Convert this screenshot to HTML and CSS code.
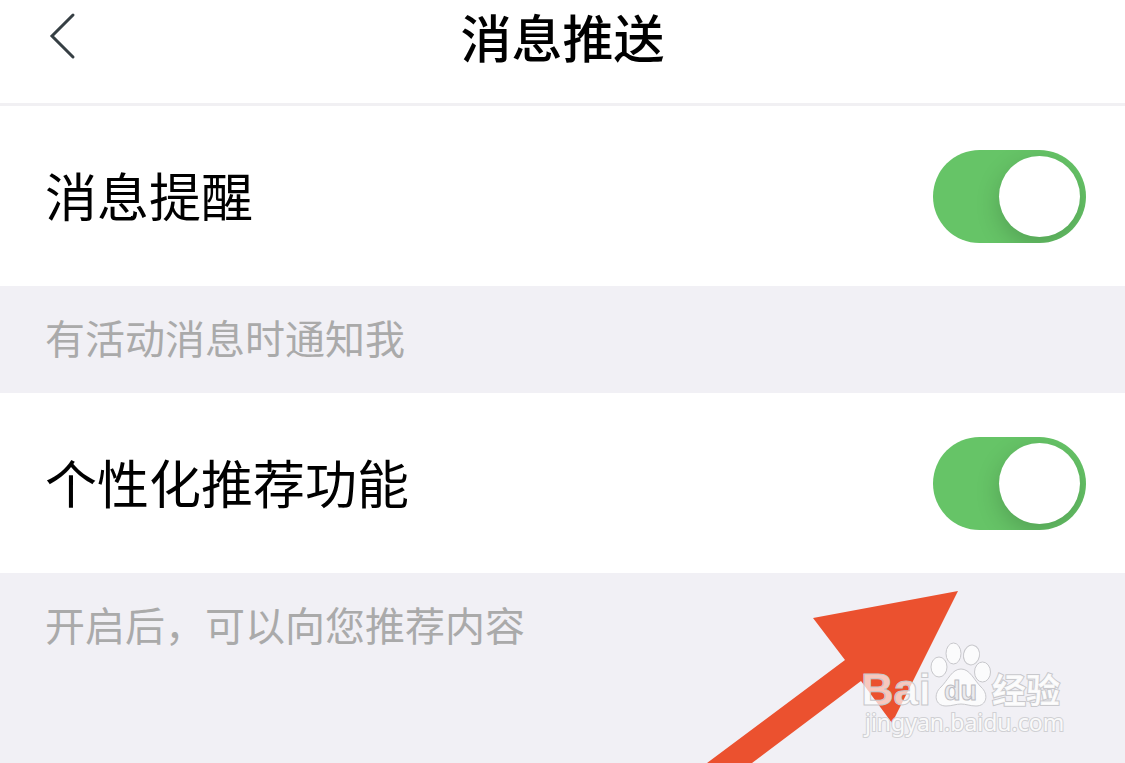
FILE: index.html
```html
<!DOCTYPE html>
<html lang="zh-CN">
<head>
<meta charset="utf-8">
<meta name="viewport" content="width=device-width, initial-scale=1">
<title>消息推送</title>
<link rel="stylesheet" href="styles.css">
</head>
<body>
<div class="page">
  <header class="header">
    <button class="back" type="button" aria-label="返回">
      <svg width="28" height="48" viewBox="0 0 28 48" fill="none" stroke="#363f44" stroke-width="3" stroke-linecap="round" stroke-linejoin="miter"><path d="M25 3 4 24 25 45"/></svg>
    </button>
    <h1 class="title">消息推送</h1>
  </header>
  <main>
    <div class="row">
      <label class="label" for="notify">消息提醒</label>
      <input class="switch" id="notify" type="checkbox" role="switch" checked>
    </div>
    <p class="hint">有活动消息时通知我</p>
    <div class="row">
      <label class="label" for="personal">个性化推荐功能</label>
      <input class="switch" id="personal" type="checkbox" role="switch" checked>
    </div>
    <p class="hint">开启后，可以向您推荐内容</p>
  </main>
  <svg class="overlay" width="360" height="180" viewBox="706 583 360 180">
    <path fill="#eb512f" d="M958 591 813 618 845 660 707 763H752L861 681 892 723Z"/>
    <g class="mark">
      <text class="mark-latin" x="861" y="705">Bai</text>
      <ellipse cx="939" cy="667" rx="8" ry="10"/>
      <ellipse cx="953.500" cy="653.500" rx="7.500" ry="10.500"/>
      <ellipse cx="971.500" cy="655" rx="8" ry="10" transform="rotate(10 971.500 655)"/>
      <ellipse cx="982.500" cy="672" rx="8" ry="10"/>
      <path d="M961 669C952 669 948 680 941 687C933 694 935 706 946 706C952 706 956 704 961 704C966 704 970 706 976 706C987 706 989 694 981 687C974 680 970 669 961 669Z"/>
      <text class="mark-du" x="944" y="700">du</text>
      <text class="mark-han" x="992" y="703">经验</text>
      <text class="mark-url" x="865" y="731">jingyan.baidu.com</text>
    </g>
  </svg>
</div>
</body>
</html>
```
FILE: styles.css
```css
* {
  box-sizing: border-box;
}

body {
  margin: 0;
  background: #f1f0f5;
  color: #000;
  font-family: "Noto Sans CJK SC", sans-serif;
}

.page {
  position: relative;
  min-height: 100vh;
  overflow: hidden;
}

.header {
  display: grid;
  grid-template-columns: 1fr auto 1fr;
  align-items: center;
  padding: 0 48px 31px;
  border-bottom: 3px solid #f1f0f3;
  background: #fff;
}

.back {
  display: flex;
  justify-self: start;
  padding: 0;
  border: 0;
  background: none;
}

.title {
  margin: 0;
  font-size: 51px;
  font-weight: 500;
  line-height: 72px;
}

.row {
  display: flex;
  align-items: center;
  justify-content: space-between;
  min-height: 180px;
  padding: 0 39px 0 45px;
  background: #fff;
}

.label {
  padding-bottom: 2px;
  font-size: 52px;
  font-weight: 400;
  line-height: 76px;
}

.switch {
  flex: none;
  width: 153px;
  height: 93px;
  margin: 0;
  padding: 6px;
  border-radius: 47px;
  appearance: none;
  background: #66c467;
  overflow: hidden;
}

.switch::before {
  content: "";
  display: block;
  width: 81px;
  height: 81px;
  border-radius: 50%;
  background: #fff;
  box-shadow: 0 8px 24px rgba(0, 0, 0, 0.18);
}

.switch:checked::before {
  margin-left: auto;
}

.hint {
  margin: 0;
  padding: 22px 45px 27px;
  color: #aaa;
  font-size: 40px;
  line-height: 58px;
}

.overlay {
  position: absolute;
  right: 59px;
  bottom: 0;
  pointer-events: none;
}

.mark {
  fill: #fff;
  fill-opacity: 0.7;
  stroke: #c8c8cc;
  stroke-width: 1px;
}

.mark-latin {
  font: bold 45px "Liberation Sans", sans-serif;
}

.mark-du {
  fill: #e4e4e8;
  stroke: #bcbcc2;
  font: bold 27px "Liberation Sans", sans-serif;
}

.mark-han {
  fill-opacity: 0.9;
  stroke-width: 2px;
  font: bold 34px "Noto Sans CJK SC", sans-serif;
  paint-order: stroke;
}

.mark-url {
  fill-opacity: 0.9;
  stroke: #d0d0d4;
  stroke-width: 2px;
  font: 23px "Noto Sans", sans-serif;
  paint-order: stroke;
}
```
